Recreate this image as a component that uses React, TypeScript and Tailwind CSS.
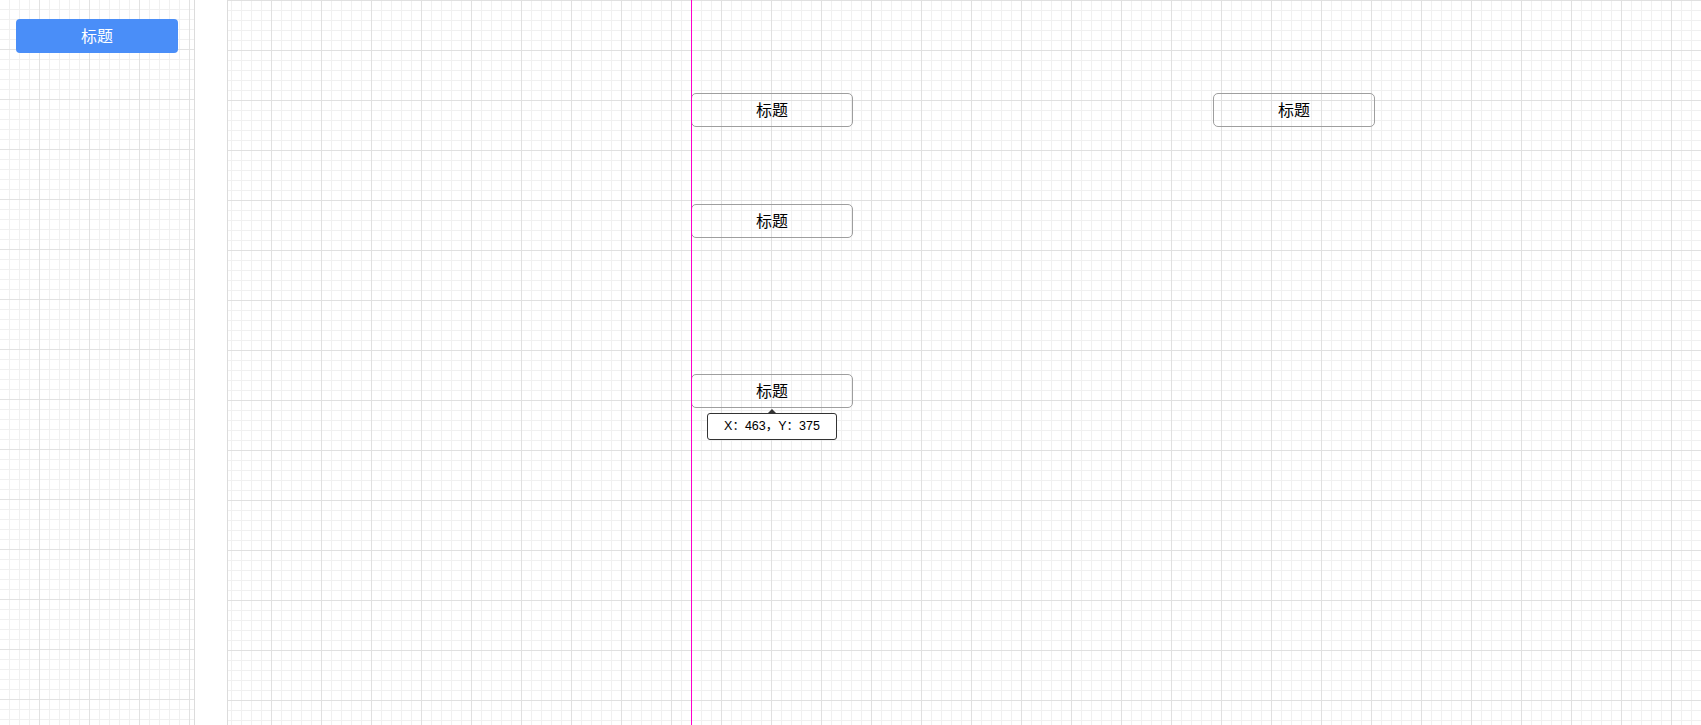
import React from "react"

const font = { fontFamily: '"Liberation Sans", "Noto Sans CJK SC", sans-serif' }

type Node = { id: string; x: number; y: number; label: string }

const nodes: Node[] = [
  { id: "a", x: 463, y: 93, label: "标题" },
  { id: "b", x: 463, y: 204, label: "标题" },
  { id: "c", x: 463, y: 374, label: "标题" },
  { id: "d", x: 985, y: 93, label: "标题" },
]

function FlowNode({ node }: { node: Node }) {
  return (
    <div
      className="absolute flex h-[34px] w-[162px] items-center justify-center rounded-[5px] border border-[#9e9e9e] bg-transparent pt-[2px] text-[16px] text-black"
      style={{ left: node.x, top: node.y }}
    >
      {node.label}
    </div>
  )
}

export default function App() {
  return (
    <div className="flex h-[725px] w-full overflow-hidden bg-white" style={font}>
      {/* Palette */}
      <div className="h-full w-[195px] shrink-0 border-r border-[#dcdcdc] bg-[linear-gradient(to_right,#e2e2e2_1px,transparent_1px),linear-gradient(to_bottom,#e2e2e2_1px,transparent_1px),linear-gradient(to_right,#f0f0f0_1px,transparent_1px),linear-gradient(to_bottom,#f0f0f0_1px,transparent_1px)] bg-[length:50px_50px,50px_50px,10px_10px,10px_10px] bg-[position:39px_49px,39px_49px,9px_9px,9px_9px]">
        <div className="ml-4 mt-[19px] flex h-[34px] w-[162px] items-center justify-center rounded-[4px] bg-[#4a8ef8] pt-[2px] text-[16px] text-white">
          标题
        </div>
      </div>

      <div className="h-full w-[32px] shrink-0 bg-white" />

      {/* Canvas */}
      <div className="relative h-full flex-1 border-l border-[#dcdcdc] bg-[linear-gradient(to_right,#e0e0e0_1px,transparent_1px),linear-gradient(to_bottom,#e0e0e0_1px,transparent_1px),linear-gradient(to_right,#f0f0f0_1px,transparent_1px),linear-gradient(to_bottom,#f0f0f0_1px,transparent_1px)] bg-[length:50px_50px,50px_50px,10px_10px,10px_10px] bg-[position:43px_0,43px_0,3px_0,3px_0]">
        {nodes.map((n) => (
          <FlowNode key={n.id} node={n} />
        ))}

        {/* alignment guide */}
        <div className="absolute left-[463px] top-0 h-full w-px bg-[#f0c]" />

        {/* position tooltip */}
        <div className="absolute left-[479px] top-[413px] flex h-[27px] w-[130px] items-center justify-center rounded-[3px] border border-[#333] bg-white text-[12.5px] text-black">
          <div className="absolute -top-[5px] left-1/2 -ml-[4px] h-0 w-0 border-b-[4px] border-l-[4px] border-r-[4px] border-b-[#333] border-l-transparent border-r-transparent" />
          X：463，Y：375
        </div>
      </div>
    </div>
  )
}
